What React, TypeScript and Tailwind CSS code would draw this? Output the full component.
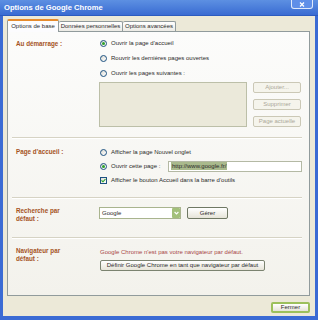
import React from 'react';

const Radio = ({ checked = false }: { checked?: boolean }) => (
  <span className="flex h-[7px] w-[7px] shrink-0 items-center justify-center rounded-full border border-[#1c5180] bg-gradient-to-br from-[#dcdbd3] to-white">
    {checked && <span className="h-[3px] w-[3px] rounded-full bg-[#2aa12a]" />}
  </span>
);

const Check = () => (
  <span className="flex h-[7px] w-[7px] shrink-0 items-center justify-center border border-[#1c5180] bg-gradient-to-br from-[#dcdbd3] to-white">
    <svg width="5" height="5" viewBox="0 0 5 5">
      <path d="M0.5 2.3 L2 3.8 L4.5 1" stroke="#21a121" strokeWidth="1.1" fill="none" />
    </svg>
  </span>
);

const Option = ({ children, checked }: { children: React.ReactNode; checked?: boolean }) => (
  <div className="flex h-[15px] items-center gap-[4px]">
    <Radio checked={checked} />
    <span>{children}</span>
  </div>
);

const Label = ({ children }: { children: React.ReactNode }) => (
  <div className="w-[84px] shrink-0 text-[6.3px] font-bold leading-[8px] text-[#a5531e]">{children}</div>
);

const SideButton = ({ children }: { children: React.ReactNode }) => (
  <div className="flex h-[11px] w-[48px] items-center justify-center rounded-[2px] border border-[#cbc8b6] bg-[#f5f4ec] text-[#aca899]">
    {children}
  </div>
);

const Sep = () => <div className="border-t border-[#d6d3c4] shadow-[0_1px_0_#ffffff]" />;

export default function App() {
  return (
    <div className="flex h-[320px] w-[318px] flex-col bg-[#3b6bd4] font-['Liberation_Sans',Arial,sans-serif] text-[6px] text-[#2a2a2a]">
      {/* title bar */}
      <div className="flex h-[16px] shrink-0 border-b border-[#2c5bbf] bg-gradient-to-b from-[#5d90e2] to-[#3a6bd2]">
        <div className="flex items-center pl-[4px] text-[7.6px] font-bold text-white">Options de Google Chrome</div>
        <div className="ml-auto mr-[5px] flex h-[9px] w-[22px] items-center justify-center self-start rounded-b-[3px] border border-t-0 border-white/80 bg-[#5f8fe8]">
          <svg width="6" height="5" viewBox="0 0 6 5">
            <path d="M1 0.5 L5 4.5 M5 0.5 L1 4.5" stroke="white" strokeWidth="1.2" />
          </svg>
        </div>
      </div>

      <div className="mx-[3px] mb-[4px] flex flex-1 flex-col bg-[#ece9d8] pl-[4px] pr-[5px]">
        {/* tabs */}
        <div className="flex items-end pt-[3px]">
          <div className="relative z-10 -mb-px flex h-[13px] w-[52px] items-center justify-center rounded-t-[2px] border border-b-0 border-[#919b9c] border-t-2 border-t-[#e68b2c] bg-[#fcfcfe]">
            Options de base
          </div>
          <div className="flex h-[10px] w-[64px] items-center justify-center rounded-t-[2px] border border-b-0 border-l-0 border-[#919b9c] bg-gradient-to-b from-white to-[#ecebe5]">
            Données personnelles
          </div>
          <div className="flex h-[10px] w-[53px] items-center justify-center rounded-t-[2px] border border-b-0 border-l-0 border-[#919b9c] bg-gradient-to-b from-white to-[#ecebe5]">
            Options avancées
          </div>
        </div>

        {/* panel */}
        <div className="flex flex-1 flex-col border border-[#919b9c] bg-gradient-to-b from-[#fcfcfb] to-[#f3f2ec] pl-[4px] pr-[7px] pt-[4px]">
          {/* démarrage */}
          <div className="flex pb-[10px] pl-[4px]">
            <Label>
              <div className="flex h-[15px] items-center">Au démarrage :</div>
            </Label>
            <div className="flex flex-col">
              <Option checked>Ouvrir la page d'accueil</Option>
              <Option>Rouvrir les dernières pages ouvertes</Option>
              <Option>Ouvrir les pages suivantes :</Option>
              <div className="ml-[-1px] mt-[1px] flex gap-[6px]">
                <div className="h-[45px] w-[148px] border border-[#bcbfa8] bg-[#ebe9da]" />
                <div className="flex flex-col gap-[6px]">
                  <SideButton>Ajouter...</SideButton>
                  <SideButton>Supprimer</SideButton>
                  <SideButton>Page actuelle</SideButton>
                </div>
              </div>
            </div>
          </div>
          <Sep />

          {/* page d'accueil */}
          <div className="flex pb-[10px] pl-[4px] pt-[7px]">
            <Label>
              <div className="flex h-[14px] items-center">Page d'accueil :</div>
            </Label>
            <div className="flex flex-1 flex-col">
              <div className="flex h-[14px] items-center gap-[4px]">
                <Radio />
                <span>Afficher la page Nouvel onglet</span>
              </div>
              <div className="flex h-[14px] items-center gap-[4px]">
                <Radio checked />
                <span>Ouvrir cette page :</span>
                <div className="ml-auto flex h-[11px] w-[134px] items-center border border-[#b4b9a4] bg-white px-[2px]">
                  <span className="bg-[#a9b98c] px-px leading-[8px] text-[#2a2a2a]">http://www.google.fr/</span>
                </div>
              </div>
              <div className="flex h-[14px] items-center gap-[4px]">
                <Check />
                <span>Afficher le bouton Accueil dans la barre d'outils</span>
              </div>
            </div>
          </div>
          <Sep />

          {/* recherche */}
          <div className="flex pb-[14px] pl-[4px] pt-[9px]">
            <Label>
              Recherche par
              <br />
              défaut :
            </Label>
            <div className="ml-[-1px] flex h-[12px] gap-[6px]">
              <div className="flex w-[82px] items-center border border-[#a9b48e] bg-white pl-[2px]">
                <span className="flex-1">Google</span>
                <span className="flex h-[10px] w-[8px] items-center justify-center rounded-[1px] bg-[#a3c07a]">
                  <svg width="5" height="4" viewBox="0 0 5 4">
                    <path d="M0.6 1 L2.5 3 L4.4 1" stroke="white" strokeWidth="1.1" fill="none" />
                  </svg>
                </span>
              </div>
              <div className="flex w-[41px] items-center justify-center rounded-[2px] border border-[#6f7863] bg-gradient-to-b from-white to-[#e6e4d8]">
                Gérer
              </div>
            </div>
          </div>
          <Sep />

          {/* navigateur */}
          <div className="flex pl-[4px] pt-[9px]">
            <Label>
              Navigateur par
              <br />
              défaut :
            </Label>
            <div className="flex flex-col">
              <div className="flex h-[10px] items-center text-[#a84646]">
                Google Chrome n'est pas votre navigateur par défaut.
              </div>
              <div className="mt-[3px] flex h-[11px] w-[165px] items-center justify-center rounded-[2px] border border-[#7b8370] bg-gradient-to-b from-white to-[#e6e4d8]">
                Définir Google Chrome en tant que navigateur par défaut
              </div>
            </div>
          </div>
        </div>

        {/* footer */}
        <div className="flex h-[20px] shrink-0 justify-end pt-[6px]">
          <div className="flex h-[11px] w-[39px] items-center justify-center rounded-[2px] border-2 border-[#9cc05c] bg-gradient-to-b from-white to-[#e6e4d8]">
            Fermer
          </div>
        </div>
      </div>
    </div>
  );
}
